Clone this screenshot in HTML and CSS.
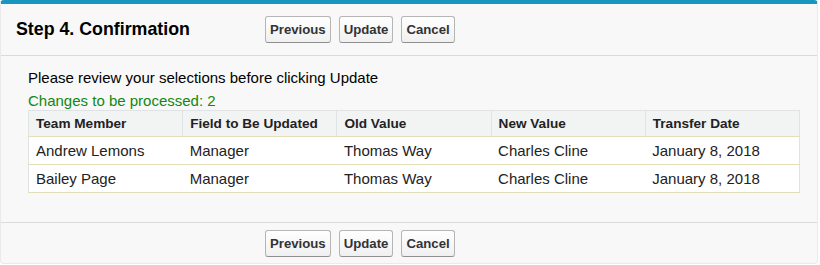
FILE: index.html
```html
<!DOCTYPE html>
<html lang="en">
<head>
    <meta charset="UTF-8">
    <title>Step 4. Confirmation</title>
    <link rel="stylesheet" href="styles.css">
</head>
<body>
    <div class="page-block">
        <div class="pb-header">
            <h2 class="pb-title">Step 4. Confirmation</h2>
            <div class="pb-buttons">
                <button class="btn">Previous</button>
                <button class="btn">Update</button>
                <button class="btn">Cancel</button>
            </div>
        </div>

        <div class="pb-body">
            <p class="intro">Please review your selections before clicking Update</p>
            <p class="changes">Changes to be processed: 2</p>
            <table class="list">
                <thead>
                    <tr>
                        <th>Team Member</th>
                        <th>Field to Be Updated</th>
                        <th>Old Value</th>
                        <th>New Value</th>
                        <th>Transfer Date</th>
                    </tr>
                </thead>
                <tbody>
                    <tr>
                        <td>Andrew Lemons</td>
                        <td>Manager</td>
                        <td>Thomas Way</td>
                        <td>Charles Cline</td>
                        <td>January 8, 2018</td>
                    </tr>
                    <tr>
                        <td>Bailey Page</td>
                        <td>Manager</td>
                        <td>Thomas Way</td>
                        <td>Charles Cline</td>
                        <td>January 8, 2018</td>
                    </tr>
                </tbody>
            </table>
        </div>

        <div class="pb-footer">
            <div class="pb-buttons">
                <button class="btn">Previous</button>
                <button class="btn">Update</button>
                <button class="btn">Cancel</button>
            </div>
        </div>
    </div>
</body>
</html>
```

FILE: styles.css
```css
body {
    margin: 0;
    padding: 0 2px 1px 0;
    font-family: "Liberation Sans", Arial, sans-serif;
    font-size: 15px;
    color: #000;
    background-color: #fff;
}
.page-block {
    background-color: #f8f8f8;
    border: 1px solid #eaeaea;
    border-top: 4px solid #1797c0;
    border-radius: 4px;
}
.pb-header {
    display: flex;
    align-items: center;
    height: 51px;
    padding-left: 15px;
    border-bottom: 1px solid #dbdbdb;
}
.pb-title {
    width: 249px;
    margin: 0;
    font-size: 17.8px;
    font-weight: bold;
}
.pb-buttons {
    display: flex;
    gap: 8px;
}
.btn {
    font-family: "Liberation Sans", Arial, sans-serif;
    font-size: 13.2px;
    font-weight: bold;
    line-height: 17px;
    color: #333;
    padding: 4px 4px;
    height: 27px;
    background: linear-gradient(#ffffff, #f0f0f0);
    border: 1px solid #b5b5b5;
    border-bottom-color: #8f8f8f;
    border-radius: 3px;
    cursor: pointer;
}
.pb-body {
    padding: 13px 17px 29px 27px;
}
.intro {
    margin: 0 0 5px;
    line-height: 18px;
}
.changes {
    margin: 0;
    line-height: 18px;
    color: #118811;
}
.list {
    width: 100%;
    border-collapse: collapse;
    table-layout: fixed;
    background-color: #fff;
    border: 1px solid #e0e3e5;
}
.list th {
    text-align: left;
    font-size: 13.6px;
    font-weight: bold;
    color: #222;
    background-color: #f2f3f3;
    padding: 4px 7px;
    line-height: 17px;
    border-right: 1px solid #e0e3e5;
    border-bottom: 1px solid #e3deb8;
}
.list td {
    padding: 5px 7px 4px;
    line-height: 18px;
    color: #222;
    border-bottom: 1px solid #e3deb8;
}
.pb-footer {
    padding: 7px 0 6px 264px;
    border-top: 1px solid #dbdbdb;
}
```
